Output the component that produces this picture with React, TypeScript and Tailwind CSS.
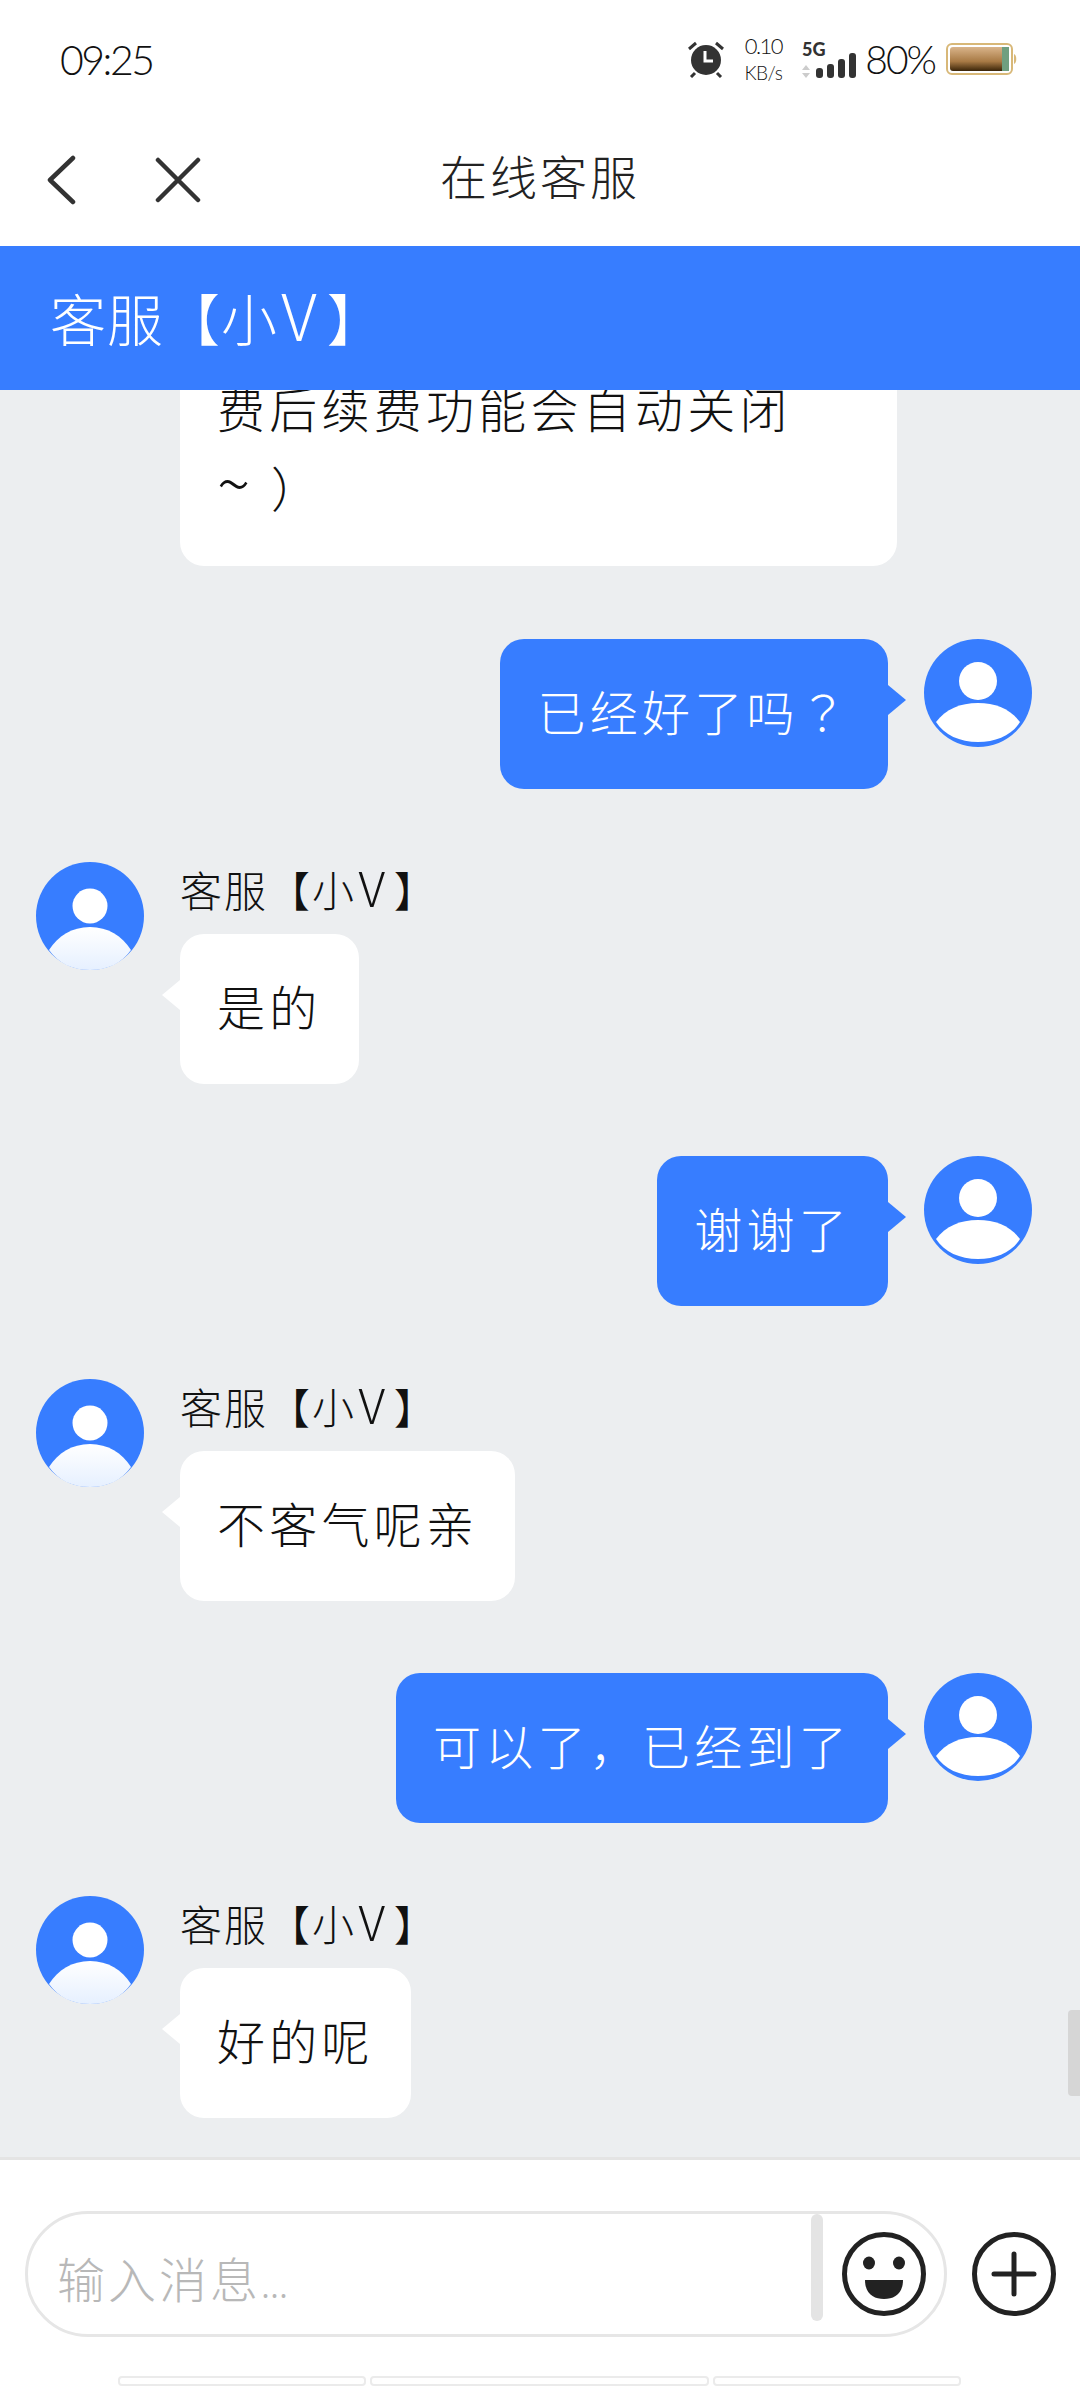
import React from 'react';

const ServiceName = () => (
  <>
    客服【小<span className="text-[1.15em] leading-none ml-[0.05em] mr-[0.14em]">V</span>】
  </>
);

type Msg = { from: 'me' | 'agent'; text: React.ReactNode };

const messages: Msg[] = [
  { from: 'me', text: <>已经好了吗<span className="font-['Noto_Sans_CJK_TC',sans-serif]">？</span></> },
  { from: 'agent', text: '是的' },
  { from: 'me', text: '谢谢了' },
  { from: 'agent', text: '不客气呢亲' },
  { from: 'me', text: '可以了，已经到了' },
  { from: 'agent', text: '好的呢' },
];

const MyAvatar = () => (
  <svg width="108" height="108" viewBox="0 0 108 108" className="shrink-0">
    <circle cx="54" cy="54" r="54" fill="#377DFF" />
    <circle cx="54" cy="42" r="19" fill="#fff" />
    <path d="M12 83 C22 70 36 64 54 64 C72 64 86 70 96 83 C88 96 72 103 54 103 C36 103 20 96 12 83 Z" fill="#fff" />
  </svg>
);

const AgentAvatar = () => (
  <svg width="108" height="108" viewBox="0 0 108 108" className="shrink-0">
    <defs>
      <linearGradient id="agentBody" x1="0" y1="0" x2="0" y2="1">
        <stop offset="0" stopColor="#ffffff" />
        <stop offset="1" stopColor="#e6f0ff" />
      </linearGradient>
    </defs>
    <circle cx="54" cy="54" r="54" fill="#377DFF" />
    <circle cx="54" cy="44" r="17.5" fill="#fff" />
    <path d="M13 88 C22 74 36 65 54 65 C72 65 86 74 95 88 C86 101 72 108 54 108 C36 108 22 101 13 88 Z" fill="url(#agentBody)" />
  </svg>
);

const StatusBar = () => (
  <div className="h-[118px] flex items-center pl-[60px] pr-[62px] text-[#111] font-['Lato',sans-serif]">
    <div className="text-[41px] tracking-[-2.5px] leading-none font-light">09:25</div>
    <div className="ml-auto flex items-center">
      <svg width="38" height="38" viewBox="0 0 38 38">
        <circle cx="19" cy="20" r="15" fill="#333" />
        <path d="M18 11v10h8" fill="none" stroke="#fff" strokeWidth="3" />
        <path d="M2 9 L9 3 M36 9 L29 3 M8 33 L4 37 M30 33 L34 37" stroke="#333" strokeWidth="3" />
      </svg>
      <div className="ml-[19px] w-[38px] flex flex-col items-center text-[19px] leading-[27px] tracking-[-0.5px] font-light">
        <span className="text-[22px] tracking-[-1.5px]">0.10</span>
        <span>KB/s</span>
      </div>
      <svg width="55" height="38" viewBox="0 0 55 38" className="ml-[20px]">
        <text x="0" y="16" fontSize="18" fontWeight="900" fill="#333" fontFamily="Lato, sans-serif">5G</text>
        <path d="M4 25 L8 30 H0 Z M4 38 L0 33 H8 Z" fill="#ccc" />
        <rect x="14" y="28" width="7" height="10" rx="3" fill="#333" />
        <rect x="25" y="24" width="7" height="14" rx="3" fill="#333" />
        <rect x="36" y="19" width="7" height="19" rx="3" fill="#333" />
        <rect x="47" y="13" width="7" height="25" rx="3" fill="#333" />
      </svg>
      <div className="ml-[8px] text-[39px] tracking-[-2px] leading-none font-light">80%</div>
      <svg width="72" height="32" viewBox="0 0 72 32" className="ml-[11px]">
        <defs>
          <linearGradient id="batteryFill" x1="0" y1="0" x2="0" y2="1">
            <stop offset="0" stopColor="#d9b48a" />
            <stop offset="0.6" stopColor="#a87a45" />
            <stop offset="1" stopColor="#3a2408" />
          </linearGradient>
        </defs>
        <rect x="1" y="1" width="65" height="30" rx="5" fill="#fff" stroke="#d8b878" strokeWidth="2" />
        <rect x="4" y="4" width="59" height="24" rx="3" fill="url(#batteryFill)" />
        <rect x="56" y="4" width="7" height="24" fill="#6f9f80" />
        <path d="M68 11 C71 12 71 20 68 21 Z" fill="#d8b878" />
      </svg>
    </div>
  </div>
);

const NavBar = () => (
  <div className="relative h-[128px] flex items-center pl-[46px] pb-[4px] text-[#333]">
    <svg width="32" height="50" viewBox="0 0 32 50" fill="none" stroke="#333" strokeWidth="4.5" strokeLinecap="round" strokeLinejoin="round">
      <path d="M27 3 L4 25 L27 47" />
    </svg>
    <svg width="46" height="46" viewBox="0 0 46 46" fill="none" stroke="#333" strokeWidth="4.5" strokeLinecap="round" className="ml-[77px]">
      <path d="M3 3 L43 43 M43 3 L3 43" />
    </svg>
    <div className="absolute inset-x-0 pb-[11px] text-center text-[47px] tracking-[3px] leading-none font-light text-[#222]">在线客服</div>
  </div>
);

const bubbleText = 'pt-[31px] pb-[39px] text-[48px] leading-[80px] tracking-[4.25px] font-light';

const Bubble = ({ from, text }: Msg) =>
  from === 'me' ? (
    <div className={`relative bg-[#377DFF] text-white rounded-[24px] px-[37px] ${bubbleText}`}>
      {text}
      <span className="absolute right-[-18px] top-[46px] w-0 h-0 border-y-[15px] border-y-transparent border-l-[18px] border-l-[#377DFF]" />
    </div>
  ) : (
    <div className={`relative bg-white text-[#111] rounded-[24px] px-[37px] ${bubbleText}`}>
      {text}
      <span className="absolute left-[-18px] top-[46px] w-0 h-0 border-y-[15px] border-y-transparent border-r-[18px] border-r-white" />
    </div>
  );

const Row = ({ msg }: { msg: Msg }) =>
  msg.from === 'me' ? (
    <div className="flex justify-end items-start pr-[48px] gap-[36px]">
      <Bubble {...msg} />
      <MyAvatar />
    </div>
  ) : (
    <div className="flex items-start pl-[36px] gap-[36px]">
      <AgentAvatar />
      <div className="flex flex-col items-start">
        <div className="h-[72px] text-[42px] leading-[50px] text-[#111] tracking-[2px] font-light">
          <ServiceName />
        </div>
        <Bubble {...msg} />
      </div>
    </div>
  );

const Composer = () => (
  <div className="h-[228px] bg-white pt-[51px] flex flex-col">
    <div className="flex items-center pl-[25px]">
      <div className="w-[922px] h-[126px] border-[3px] border-[#e6e6e6] rounded-[63px] flex items-center pl-[29px] pr-[18px]">
        <span className="mt-[6px] text-[48px] tracking-[3px] leading-none font-light text-[#b8b8b8]">
          输入消息<span className="text-[36px] tracking-normal">...</span>
        </span>
        <div className="ml-auto self-start w-[12px] h-[107px] rounded-full bg-[#e4e4e4]" />
        <svg width="84" height="84" viewBox="0 0 84 84" className="ml-[19px]">
          <circle cx="42" cy="42" r="39.5" fill="none" stroke="#222" strokeWidth="5" />
          <ellipse cx="27" cy="31" rx="6" ry="6.5" fill="#222" />
          <ellipse cx="57" cy="31" rx="6" ry="6.5" fill="#222" />
          <path d="M23 48 H61 C61 62 52 67 42 67 C32 67 23 62 23 48 Z" fill="#222" />
        </svg>
      </div>
      <svg width="84" height="84" viewBox="0 0 84 84" className="ml-[25px]">
        <circle cx="42" cy="42" r="39.5" fill="none" stroke="#222" strokeWidth="5" />
        <path d="M42 22 V62 M22 42 H62" stroke="#222" strokeWidth="5" strokeLinecap="round" />
      </svg>
    </div>
    <div className="mt-[39px] flex gap-[4px] pl-[118px]">
      <div className="w-[248px] h-[10px] rounded-[4px] border-2 border-[#ebebeb]" />
      <div className="w-[339px] h-[10px] rounded-[4px] border-2 border-[#ebebeb]" />
      <div className="w-[248px] h-[10px] rounded-[4px] border-2 border-[#ebebeb]" />
    </div>
  </div>
);

export default function App() {
  return (
    <div className="w-[1080px] h-[2388px] flex flex-col overflow-hidden bg-white font-['Noto_Sans_CJK_SC','Noto_Sans',sans-serif]">
      <StatusBar />
      <NavBar />
      <div className="h-[144px] shrink-0 bg-[#377DFF] flex items-center pl-[50px] pb-[10px] text-white text-[56px] tracking-[1px] leading-none font-light">
        <div>
          <ServiceName />
        </div>
      </div>

      <div className="relative h-[1770px] shrink-0 overflow-hidden bg-[#ECEEF0] border-b-[3px] border-[#e4e4e4] flex flex-col justify-end gap-[72.6px] pb-[39px]">
        <div className="pl-[180px]">
          <div className="w-[717px] bg-white rounded-[24px] px-[37px] pt-[36px] pb-[40px] text-[48px] leading-[79px] tracking-[4.25px] font-light text-[#111]">
            <div>费后续费功能会自动关闭</div>
            <div>
              <span className="text-[62px] leading-none tracking-[6px]">~</span> ）
            </div>
          </div>
        </div>
        {messages.map((m, i) => (
          <Row key={i} msg={m} />
        ))}
        <div className="absolute right-0 top-[1620px] w-[12px] h-[86px] rounded-l-[4px] bg-[#d6d6d6]" />
      </div>

      <Composer />
    </div>
  );
}
